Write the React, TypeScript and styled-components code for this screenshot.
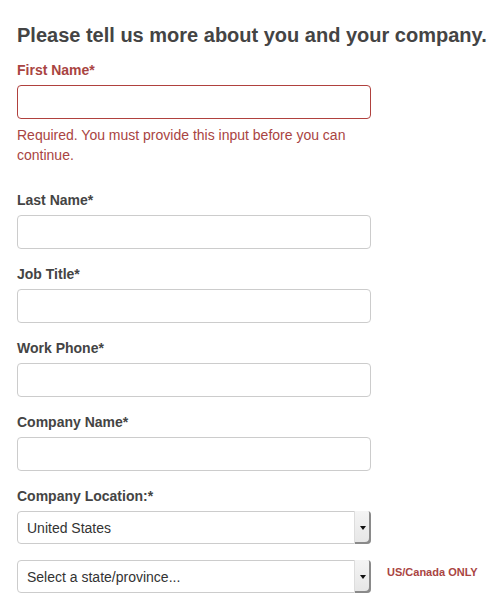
import styled, { createGlobalStyle } from "styled-components";

const GlobalStyle = createGlobalStyle`
  * {
    box-sizing: border-box;
  }

  body {
    margin: 0;
    background: #ffffff;
    font-family: "Liberation Sans", Arial, sans-serif;
    color: #444444;
  }
`;

const fields = ["Last Name*", "Job Title*", "Work Phone*", "Company Name*"];

const App = () => {
  return (
    <>
      <GlobalStyle />
      <Page>
        <Heading>Please tell us more about you and your company.</Heading>

        <Field>
          <Label $error>First Name*</Label>
          <TextInput type="text" $error />
          <ErrorText>
            Required. You must provide this input before you can continue.
          </ErrorText>
        </Field>

        {fields.map((name) => (
          <Field key={name}>
            <Label>{name}</Label>
            <TextInput type="text" />
          </Field>
        ))}

        <Field>
          <Label>Company Location:*</Label>
          <SelectRow>
            <SelectBox>
              <Select defaultValue="us">
                <option value="us">United States</option>
              </Select>
              <Arrow />
            </SelectBox>
          </SelectRow>
          <SelectRow>
            <SelectBox>
              <Select defaultValue="">
                <option value="">Select a state/province...</option>
              </Select>
              <Arrow />
            </SelectBox>
            <Note>US/Canada ONLY</Note>
          </SelectRow>
        </Field>
      </Page>
    </>
  );
};

const Page = styled.div`
  display: flex;
  flex-direction: column;

  padding: 23px 17px 0;
`;

const Heading = styled.h1`
  margin: 0 0 13px;

  font-size: 20px;
  line-height: 24px;
  font-weight: 700;
  color: #444444;
  white-space: nowrap;
`;

const Field = styled.div`
  display: flex;
  flex-direction: column;
  align-items: flex-start;

  margin-bottom: 15px;
`;

const Label = styled.label<{ $error?: boolean }>`
  margin-bottom: 5px;

  font-size: 14px;
  line-height: 20px;
  font-weight: 700;
  color: ${(p) => (p.$error ? "#a94442" : "#444444")};
`;

const TextInput = styled.input<{ $error?: boolean }>`
  width: 354px;
  height: 34px;
  padding: 6px 8px;

  border: 1px solid ${(p) => (p.$error ? "#b0413e" : "#cccccc")};
  border-radius: 4px;
  background: #ffffff;

  font-family: inherit;
  font-size: 14px;
  outline: none;
`;

const ErrorText = styled.div`
  width: 354px;
  margin: 6px 0 10px;

  font-size: 14px;
  line-height: 20px;
  color: #a94442;
`;

const SelectRow = styled.div`
  display: flex;
  align-items: flex-start;
  gap: 16px;

  & + & {
    margin-top: 16px;
  }
`;

const SelectBox = styled.div`
  position: relative;
  flex: 0 0 354px;
  height: 33px;
`;

const Select = styled.select`
  width: 100%;
  height: 100%;
  padding: 0 24px 0 9px;

  appearance: none;
  border: 1px solid #cccccc;
  border-radius: 4px;
  background: #ffffff;

  font-family: "Liberation Sans", Arial, sans-serif;
  font-size: 14px;
  color: #333333;
  outline: none;
`;

const Arrow = styled.span`
  position: absolute;
  top: 0;
  right: 0;

  width: 17px;
  height: 33px;

  border-left: 1px solid #dddddd;
  border-radius: 0 4px 4px 0;
  background: linear-gradient(#f4f4f4, #e6e6e6);
  box-shadow: inset -2px -2px 0 #8a8a8a;
  pointer-events: none;

  &::after {
    content: "";
    position: absolute;
    top: 15px;
    left: 5px;

    border-left: 3px solid transparent;
    border-right: 3px solid transparent;
    border-top: 4px solid #111111;
  }
`;

const Note = styled.div`
  margin-top: 5px;

  font-size: 11px;
  line-height: 14px;
  font-weight: 700;
  color: #a94442;
  white-space: nowrap;
`;

export default App;
